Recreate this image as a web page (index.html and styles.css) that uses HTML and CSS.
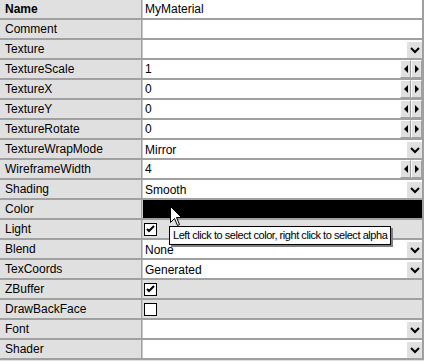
FILE: index.html
```html
<!DOCTYPE html>
<html lang="en">
<head>
  <meta charset="UTF-8" />
  <title>Material properties</title>
  <link rel="stylesheet" href="styles.css">
</head>
<body>

  <!-- Property grid -->
  <div class="props">
    <div class="row"><div class="label bold">Name</div><div class="value"><span class="txt">MyMaterial</span></div></div>
    <div class="row"><div class="label">Comment</div><div class="value"></div></div>
    <div class="row"><div class="label">Texture</div><div class="value"><span class="txt"></span><span class="drop"><svg width="10" height="8" viewBox="0 0 10 8"><polyline points="1,2 5,6 9,2" /></svg></span></div></div>
    <div class="row"><div class="label">TextureScale</div><div class="value"><span class="txt">1</span><span class="spin"><b class="left"></b></span><span class="spin"><b class="right"></b></span></div></div>
    <div class="row"><div class="label">TextureX</div><div class="value"><span class="txt">0</span><span class="spin"><b class="left"></b></span><span class="spin"><b class="right"></b></span></div></div>
    <div class="row"><div class="label">TextureY</div><div class="value"><span class="txt">0</span><span class="spin"><b class="left"></b></span><span class="spin"><b class="right"></b></span></div></div>
    <div class="row"><div class="label">TextureRotate</div><div class="value"><span class="txt">0</span><span class="spin"><b class="left"></b></span><span class="spin"><b class="right"></b></span></div></div>
    <div class="row"><div class="label">TextureWrapMode</div><div class="value"><span class="txt low">Mirror</span><span class="drop"><svg width="10" height="8" viewBox="0 0 10 8"><polyline points="1,2 5,6 9,2" /></svg></span></div></div>
    <div class="row"><div class="label">WireframeWidth</div><div class="value"><span class="txt">4</span><span class="spin"><b class="left"></b></span><span class="spin"><b class="right"></b></span></div></div>
    <div class="row"><div class="label">Shading</div><div class="value"><span class="txt low">Smooth</span><span class="drop"><svg width="10" height="8" viewBox="0 0 10 8"><polyline points="1,2 5,6 9,2" /></svg></span></div></div>
    <div class="row"><div class="label">Color</div><div class="value color"></div></div>
    <div class="row"><div class="label">Light</div><div class="value plain"><span class="check on"><svg width="9" height="8" viewBox="0 0 9 8"><polyline points="1,4 3,6 8,1" /></svg></span></div></div>
    <div class="row"><div class="label">Blend</div><div class="value"><span class="txt low">None</span><span class="drop"><svg width="10" height="8" viewBox="0 0 10 8"><polyline points="1,2 5,6 9,2" /></svg></span></div></div>
    <div class="row"><div class="label">TexCoords</div><div class="value"><span class="txt low">Generated</span><span class="drop"><svg width="10" height="8" viewBox="0 0 10 8"><polyline points="1,2 5,6 9,2" /></svg></span></div></div>
    <div class="row"><div class="label">ZBuffer</div><div class="value plain"><span class="check on"><svg width="9" height="8" viewBox="0 0 9 8"><polyline points="1,4 3,6 8,1" /></svg></span></div></div>
    <div class="row"><div class="label">DrawBackFace</div><div class="value plain"><span class="check"></span></div></div>
    <div class="row"><div class="label">Font</div><div class="value"><span class="txt"></span><span class="drop"><svg width="10" height="8" viewBox="0 0 10 8"><polyline points="1,2 5,6 9,2" /></svg></span></div></div>
    <div class="row"><div class="label">Shader</div><div class="value"><span class="txt"></span><span class="drop"><svg width="10" height="8" viewBox="0 0 10 8"><polyline points="1,2 5,6 9,2" /></svg></span></div></div>
  </div>

  <!-- Mouse pointer + tooltip over the Color row -->
  <svg class="cursor" width="13" height="21" viewBox="0 0 13 21">
    <path d="M0.5,0.5 L0.5,16.5 L4.5,12.5 L7.5,19.5 L9.5,18.5 L6.5,11.5 L11.5,11.5 Z" />
  </svg>
  <div class="tooltip">Left click to select color, right click to select alpha</div>

</body>
</html>
```

FILE: styles.css
```css
body {
  margin: 0;
  background-color: #e0e0e0;
  font-family: "Liberation Sans", Arial, sans-serif;
  font-size: 12px;
  color: #000;
  position: relative;
}

/* Grid */
.props {
  width: 424px;
  display: flex;
  flex-direction: column;
}

.row {
  display: flex;
  height: 18px;
  border-bottom: 2px solid #a0a0a0;
}

.label {
  width: 136px;
  padding-left: 5px;
  border-right: 1px solid #a0a0a0;
  line-height: 19px;
  background-color: #e0e0e0;
  white-space: nowrap;
}

.label.bold {
  font-weight: bold;
}

.value {
  flex: 1;
  display: flex;
  align-items: stretch;
  background-color: #fff;
  border-left: 1px solid #c8c8c8;
  border-right: 2px solid #a0a0a0;
}

.value.plain {
  background-color: #e0e0e0;
  align-items: center;
}

.value.color {
  background-color: #000;
}

.txt {
  flex: 1;
  padding-left: 2px;
  line-height: 19px;
}

.txt.low {
  line-height: 21px;
}

/* dropdown button */
.drop {
  width: 15px;
  margin-top: 1px;
  display: flex;
  align-items: center;
  justify-content: center;
  background-color: #e0e0e0;
  border-left: 1px solid #fff;
  border-top: 1px solid #fff;
}

.drop polyline {
  fill: none;
  stroke: #000;
  stroke-width: 2;
}

/* spinner buttons */
.spin {
  width: 9px;
  display: flex;
  align-items: center;
  justify-content: center;
  background-color: #e0e0e0;
  border: 1px solid #fff;
  border-right-color: #a0a0a0;
  border-bottom-color: #a0a0a0;
}

.spin b {
  width: 0;
  height: 0;
  border-top: 4px solid transparent;
  border-bottom: 4px solid transparent;
}

.spin b.left {
  border-right: 4px solid #000;
}

.spin b.right {
  border-left: 4px solid #000;
}

/* checkbox */
.check {
  width: 11px;
  height: 11px;
  margin-left: 1px;
  border: 1px solid #000;
  background-color: #fff;
  display: flex;
  align-items: center;
  justify-content: center;
}

.check polyline {
  fill: none;
  stroke: #000;
  stroke-width: 2;
}

/* overlay */
.cursor {
  position: absolute;
  left: 170px;
  top: 206px;
}

.cursor path {
  fill: #fff;
  stroke: #000;
  stroke-width: 1;
}

.tooltip {
  position: absolute;
  left: 169px;
  top: 226px;
  height: 17px;
  line-height: 17px;
  padding: 0 3px;
  font-size: 11px;
  letter-spacing: -0.45px;
  background-color: #fbfbfb;
  border: 1px solid #000;
  box-shadow: 2px 2px 0 #808080;
  white-space: nowrap;
}
```
